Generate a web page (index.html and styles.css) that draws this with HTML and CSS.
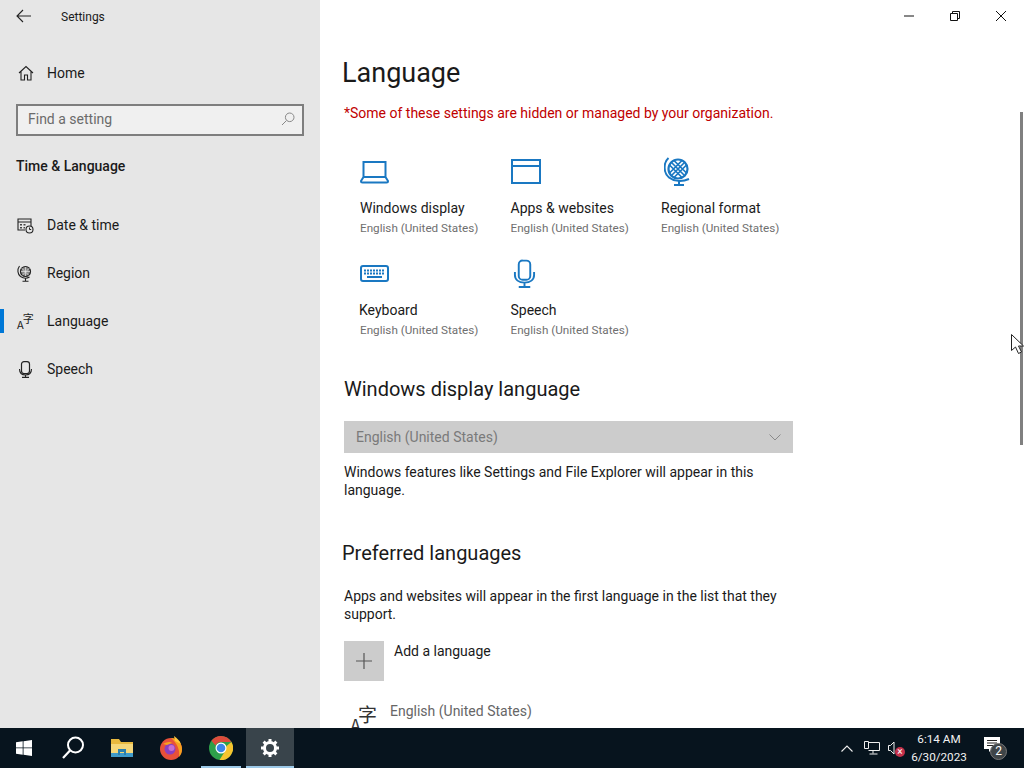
FILE: index.html
```html
<!DOCTYPE html>
<html lang="en">
<head>
<meta charset="utf-8">
<title>Settings</title>
<link rel="stylesheet" href="styles.css">
</head>
<body>
<div class="app">
  <div class="window">
    <aside class="sidebar">
      <div class="side-title">
        <svg class="back" viewBox="0 0 16 14" width="16" height="14"><path d="M7 1 1 7l6 6M1 7h14" fill="none" stroke="#222" stroke-width="1.1"/></svg>
        <span class="app-name">Settings</span>
      </div>
      <div class="nav-row home">
        <svg class="nav-icon" viewBox="0 0 16 16" width="16" height="16"><path d="M1 8 8 1.500 15 8M3 6.500V15h3.500v-5h3v5H13V6.500" fill="none" stroke="#222" stroke-width="1.100"/></svg>
        <span>Home</span>
      </div>
      <div class="search">
        <span>Find a setting</span>
        <svg viewBox="0 0 14 14" width="14" height="14"><circle cx="8.700" cy="5.300" r="4.300" fill="none" stroke="#888" stroke-width="1"/><path d="M5.500 8.500 1 13" stroke="#888" stroke-width="1"/></svg>
      </div>
      <div class="group">Time &amp; Language</div>
      <nav class="nav">
        <div class="nav-row">
          <svg class="nav-icon" viewBox="0 0 17 17" width="17" height="17"><path d="M8 13H1V2h13v7M1 5h13" fill="none" stroke="#222" stroke-width="1.100"/><path d="M3 7h2v1.500H3zM6.500 7h2v1.500h-2zM3 10h2v1.500H3zM6.500 10H8v1.500H6.500z" fill="#444"/><circle cx="12.500" cy="12.500" r="3.500" fill="#e6e6e6" stroke="#222" stroke-width="1.100"/><path d="M12.500 10.500v2h1.700" fill="none" stroke="#222"/></svg>
          <span>Date &amp; time</span>
        </div>
        <div class="nav-row">
          <svg class="nav-icon" viewBox="0 0 17 17" width="17" height="17"><circle cx="8.500" cy="6.500" r="5" fill="#888" stroke="#222" stroke-width="1.200"/><path d="M4.500 3 12 10.500M12.500 3 5 10.500M4 6.500h9M8.500 2v9" stroke="#e6e6e6" stroke-width=".7"/><path d="M2.500 1C0 4.500.5 9 3.500 11.500c3 2 6.500 2 9 .5M8.500 13v3M5.500 16.200h6" fill="none" stroke="#222" stroke-width="1.100"/></svg>
          <span>Region</span>
        </div>
        <div class="nav-row active">
          <div class="nav-glyph"><span class="g-a">A</span><span class="g-z">字</span></div>
          <span>Language</span>
        </div>
        <div class="nav-row">
          <svg class="nav-icon" viewBox="0 0 17 17" width="17" height="17"><rect x="4.500" y=".6" width="8" height="12" rx="2.500" fill="none" stroke="#222" stroke-width="1.200"/><path d="M2.500 8c0 4 2 6 6 6s6-2 6-6M8.500 14v2M5 16.400h7" fill="none" stroke="#222" stroke-width="1.100"/></svg>
          <span>Speech</span>
        </div>
      </nav>
    </aside>
    <main class="main">
      <div class="controls">
        <div class="ctl"><svg viewBox="0 0 10 10" width="10" height="10"><path d="M0 5h10" stroke="#111"/></svg></div>
        <div class="ctl"><svg viewBox="0 0 10 10" width="10" height="10"><path d="M.5 2.500h7v7h-7zM2.500 2.500V.5h7v7h-2" fill="none" stroke="#111"/></svg></div>
        <div class="ctl"><svg viewBox="0 0 10 10" width="10" height="10"><path d="M0 0l10 10M10 0 0 10" stroke="#111"/></svg></div>
      </div>
      <h1 class="title">Language</h1>
      <p class="warning">*Some of these settings are hidden or managed by your organization.</p>
      <div class="tiles">
        <div class="tile">
          <div class="tile-icon"><svg viewBox="0 0 30 24" width="30" height="24"><path d="M3.500 2h22v15h-22zM3.500 17 1 21c0 1 .5 1.500 1.500 1.500h24c1 0 1.500-.5 1.500-1.500l-2.500-4" fill="none" stroke="#1a78c2" stroke-width="2"/></svg></div>
          <div class="tile-name">Windows display</div>
          <div class="tile-sub">English (United States)</div>
        </div>
        <div class="tile">
          <div class="tile-icon"><svg viewBox="0 0 30 26" width="30" height="26"><path d="M1 1h28v23H1zM1 7h28" fill="none" stroke="#1a78c2" stroke-width="2"/></svg></div>
          <div class="tile-name">Apps &amp; websites</div>
          <div class="tile-sub">English (United States)</div>
        </div>
        <div class="tile">
          <div class="tile-icon globe"><svg viewBox="0 0 26 30" width="26" height="30"><circle cx="14" cy="12" r="9.500" fill="none" stroke="#1a78c2" stroke-width="2.200"/><path d="M7 5 21 19M21 5 7 19M10 3.500 22.500 16M18 3.500 5.500 16M5.500 8 18 20.500M22.500 8 10 20.500" fill="none" stroke="#1a78c2" stroke-width="1.700"/><path d="M4.500 1C-1 6-.5 16 5 20.500c5 4 13 4.500 20 1.500M15 24v4M10 28h10" fill="none" stroke="#1a78c2" stroke-width="2"/></svg></div>
          <div class="tile-name">Regional format</div>
          <div class="tile-sub">English (United States)</div>
        </div>
        <div class="tile shift">
          <div class="tile-icon"><svg viewBox="0 0 30 20" width="30" height="20"><rect x="1" y="2" width="27" height="15" rx="2" fill="none" stroke="#1a78c2" stroke-width="2"/><path d="M4 6.500h21M4 9.500h21" stroke="#1a78c2" stroke-width="2" stroke-dasharray="2 1"/><path d="M7 13h15" stroke="#1a78c2" stroke-width="2"/></svg></div>
          <div class="tile-name">Keyboard</div>
          <div class="tile-sub">English (United States)</div>
        </div>
        <div class="tile">
          <div class="tile-icon mic"><svg viewBox="0 0 24 30" width="23" height="30"><rect x="6" y="1" width="12" height="20" rx="4" fill="none" stroke="#1a78c2" stroke-width="2"/><path d="M2 13v3c0 5 4 8 10 8s10-3 10-8v-3M12 24v4M6 28.500h12" fill="none" stroke="#1a78c2" stroke-width="2"/></svg></div>
          <div class="tile-name">Speech</div>
          <div class="tile-sub">English (United States)</div>
        </div>
      </div>
      <h2 class="section">Windows display language</h2>
      <div class="select">
        <span>English (United States)</span>
        <svg viewBox="0 0 12 7" width="12" height="7"><path d="M.5.500 6 6l5.500-5.500" fill="none" stroke="#8a8a8a"/></svg>
      </div>
      <p class="body-text">Windows features like Settings and File Explorer will appear in this language.</p>
      <h2 class="section pref">Preferred languages</h2>
      <p class="body-text apps">Apps and websites will appear in the first language in the list that they support.</p>
      <div class="add">
        <div class="add-btn"><svg viewBox="0 0 16 16" width="16" height="16"><path d="M8 0v16M0 8h16" stroke="#555" stroke-width="1.200"/></svg></div>
        <span>Add a language</span>
      </div>
      <div class="lang">
        <div class="lang-icon"><span class="l-a">A</span><span class="l-z">字</span></div>
        <span>English (United States)</span>
      </div>
      <div class="scrollbar"></div>
      <svg class="cursor" viewBox="0 0 13 20" width="13" height="20"><path d="M.5.500v16l4-3.500 3 6.500 3-1.500-3-6h5z" fill="#fff" stroke="#222"/></svg>
    </main>
  </div>
  <footer class="taskbar">
    <div class="task-left">
      <div class="task start"><svg viewBox="0 0 16 16" width="16" height="16"><path d="M0 2.300 6.700 1.300V7.500H0zM7.500 1.200 16 0V7.500H7.500zM0 8.300H6.700V14.700L0 13.700zM7.500 8.300H16V16L7.500 14.800z" fill="#fff"/></svg></div>
      <div class="task"><svg viewBox="0 0 24 24" width="24" height="24"><circle cx="14.500" cy="9" r="7.500" fill="none" stroke="#fff" stroke-width="2"/><path d="M9 14.500 2 22" stroke="#fff" stroke-width="2.200"/></svg></div>
      <div class="task"><svg viewBox="0 0 24 20" width="24" height="20"><path d="M1 1h8l2 3h12v15H1z" fill="#e8b93f"/><path d="M1 6h22v13H1z" fill="#f5d77a"/><path d="M1 15h22v4H1z" fill="#3f9ac9"/><path d="M8 11h8v6h-2v-3h-4v3H8z" fill="#2a7fae"/></svg></div>
      <div class="task"><svg viewBox="0 0 24 24" width="24" height="24"><circle cx="12" cy="13" r="11" fill="#e8503a"/><path d="M12 2c6 0 11 5 11 11 0 3-1 6-3 8 1-6-1-13-8-19z" fill="#f7a11f"/><path d="M15 0c3 2 6 5 7 8l-6-3z" fill="#ffc93d"/><circle cx="11" cy="13" r="5.500" fill="#8c3fc0"/><circle cx="12.500" cy="12" r="3" fill="#c56ed1"/><path d="M4 8c3-2 7-3 9-1l-5 2z" fill="#f7a11f"/></svg></div>
      <div class="task chrome"><svg viewBox="0 0 24 24" width="24" height="24"><circle cx="12" cy="12" r="12" fill="#2ea04a"/><path d="M12 0a12 12 0 0 1 10.400 6H12a6 6 0 0 0-5.500 3.500L2.400 4.800A12 12 0 0 1 12 0z" fill="#dd4b3c"/><path d="M22.400 6A12 12 0 0 1 10.500 24L15.500 16 17.500 10z" fill="#f6c42f"/><circle cx="12" cy="12" r="5.500" fill="#fff"/><circle cx="12" cy="12" r="4.300" fill="#3c85e8"/></svg></div>
      <div class="task settings"><svg viewBox="0 0 20 20" width="20" height="20"><circle cx="10" cy="10" r="5.500" fill="none" stroke="#fff" stroke-width="3"/><path d="M10 1v18M1 10h18M3.600 3.600l12.800 12.800M16.400 3.600 3.600 16.400" stroke="#fff" stroke-width="3" stroke-dasharray="3 12 3 0"/></svg></div>
    </div>
    <div class="tray">
      <svg class="chev" viewBox="0 0 12 7" width="12" height="7"><path d="M.5 6.500 6 1l5.500 5.500" fill="none" stroke="#eee" stroke-width="1.100"/></svg>
      <svg class="net" viewBox="0 0 16 16" width="16" height="16"><path d="M4.500 2.500h11v8h-11M9 10.500v3M5.500 14h8M.5 1.500h4v7h-4z" fill="none" stroke="#eee"/></svg>
      <div class="sound">
        <svg viewBox="0 0 7 14" width="7" height="14"><path d="M.5 4.500h2L6 1v12L2.500 9.500H.5z" fill="none" stroke="#eee"/></svg>
        <span class="mute">×</span>
      </div>
      <div class="clock"><div>6:14 AM</div><div>6/30/2023</div></div>
      <div class="notif">
        <svg viewBox="0 0 16 16" width="16" height="16"><path d="M0 0h16v12H8l-3 3v-3H0z" fill="#fff"/><path d="M3 3.500h10M3 6h10M3 8.500h7" stroke="#222"/></svg>
        <span class="badge">2</span>
      </div>
    </div>
  </footer>
</div>
</body>
</html>
```
FILE: styles.css
```css
* { box-sizing: border-box; }
html, body { margin: 0; height: 100%; }
body { font-family: Roboto, "Noto Sans", sans-serif; font-size: 14px; color: #1a1a1a; background: #fff; overflow: hidden; }
.app { height: 768px; display: flex; flex-direction: column; }
.window { flex: 1; display: flex; min-height: 0; }
.sidebar { width: 320px; background: #e6e6e6; flex: none; }
.side-title { height: 32px; display: flex; align-items: center; padding-left: 16px; }
.back { margin-right: 29px; }
.app-name { font-size: 12px; padding-top: 1px; }
.nav-row { height: 48px; display: flex; align-items: center; padding-left: 17px; gap: 13px; position: relative; }
.home { margin-top: 17px; padding-left: 18px; gap: 13px; }
.nav-icon { flex: none; }
.nav-glyph { width: 17px; height: 17px; display: flex; flex: none; font-family: "Noto Sans CJK SC", sans-serif; color: #222; }
.g-a { margin-top: 5px; font-size: 11px; line-height: 13px; }
.g-z { margin: -1px 0 0 -1px; font-size: 11px; line-height: 13px; }
.search { margin: 7px 16px 0 16px; height: 32px; border: 2px solid #7e7e7e; background: #f0f0f0; display: flex; align-items: center; justify-content: space-between; padding: 0 7px 2px 10px; color: #6b6b6b; }
.group { margin-top: 21px; padding-left: 16px; font-weight: 500; height: 19px; line-height: 19px; }
.nav { margin-top: 25px; }
.active::before { content: ""; position: absolute; left: 0; top: 12px; width: 4px; height: 24px; background: #0078d7; }
.main { flex: 1; position: relative; overflow: hidden; min-width: 0; padding-left: 24px; }
.controls { display: flex; justify-content: flex-end; height: 32px; }
.ctl { width: 46px; display: flex; align-items: center; justify-content: center; }
.title { margin: 21px 0 0 -2px; font-size: 27px; font-weight: 400; line-height: 40px; }
.warning { margin: 10px 0 0; color: #c00000; line-height: 20px; }
.tiles { margin: 34px 0 0 16px; display: grid; grid-template-columns: repeat(3, 150.500px); grid-auto-rows: 102px; }
.tile-icon { height: 30px; display: flex; align-items: center; }
.globe { padding-left: 3px; }
.mic { padding-left: 2px; }
.shift .tile-name { margin-left: -1px; }
.tile-name { margin-top: 11px; line-height: 20px; }
.tile-sub { font-size: 11.700px; line-height: 20px; color: #6f6f6f; }
.section { margin: 0; font-size: 20px; font-weight: 400; line-height: 28px; }
.tiles + .section { margin-top: 14px; }
.select { margin-top: 18px; width: 449px; height: 32px; background: #cccccc; color: #7a7a7a; display: flex; align-items: center; justify-content: space-between; padding: 0 12px; }
.body-text { margin: 10px 0 0; width: 449px; line-height: 18px; }
.pref { margin: 40px 0 0 -2px; }
.apps { margin-top: 20px; }
.add { margin-top: 18px; display: flex; gap: 10px; line-height: 20px; }
.add-btn { width: 40px; height: 40px; background: #cccccc; display: flex; align-items: center; justify-content: center; }
.lang { margin: 20px 0 0 6px; display: flex; gap: 12px; line-height: 20px; color: #666; }
.lang-icon { width: 28px; height: 30px; display: flex; font-family: "Noto Sans CJK SC", sans-serif; color: #333; }
.l-a { margin-top: 13px; font-size: 18px; line-height: 22px; }
.l-z { margin: 1px 0 0 -3px; font-size: 19px; line-height: 24px; }
.scrollbar { position: absolute; left: 700px; top: 112px; width: 3px; height: 333px; background: #808080; }
.cursor { position: absolute; left: 691px; top: 334px; }
.taskbar { height: 40px; flex: none; background: #07141e; display: flex; justify-content: space-between; color: #fff; }
.task-left { display: flex; }
.task { width: 48px; height: 40px; display: flex; align-items: center; justify-content: center; position: relative; margin-right: 1px; }
.chrome { margin-left: 1px; }
.chrome::after { content: ""; position: absolute; left: 4px; right: 4px; bottom: 0; height: 2px; background: #9cc9e8; }
.settings { background: #39444b; }
.settings::after { content: ""; position: absolute; left: 0; right: 0; bottom: 0; height: 2px; background: #9cc9e8; }
.tray { display: flex; align-items: center; padding-right: 24px; }
.chev { margin-right: 11px; }
.net { margin-right: 5px; }
.sound { width: 18px; height: 14px; position: relative; display: flex; padding-left: 3px; }
.mute { position: absolute; left: 10px; top: 6px; width: 10px; height: 10px; border-radius: 50%; background: #c4314b; font-size: 10px; line-height: 10px; text-align: center; }
.clock { width: 72px; text-align: center; font-size: 11.700px; line-height: 18px; color: #f2f2f2; }
.notif { margin-left: 9px; position: relative; width: 16px; height: 24px; padding-top: 1px; }
.badge { position: absolute; left: 6px; top: 7px; width: 17px; height: 17px; border-radius: 50%; background: #3f4548; border: 1px solid #777; font-size: 12px; line-height: 15px; text-align: center; }
```
